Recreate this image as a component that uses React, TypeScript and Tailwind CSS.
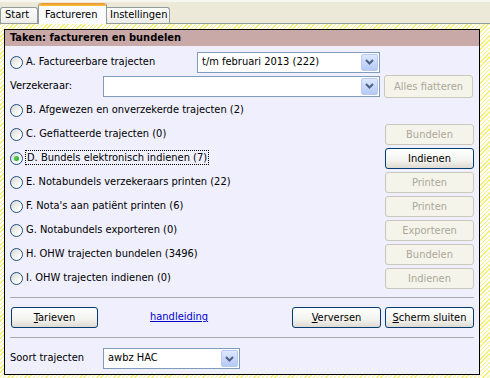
import React from "react";

function Radio({ checked }: { checked?: boolean }) {
  return (
    <span className="inline-flex w-[13px] h-[13px] shrink-0 items-center justify-center rounded-full border border-[#1C5180] bg-[linear-gradient(135deg,#D4D3CC,#FFFFFF_75%)]">
      {checked && (
        <span className="block w-[5px] h-[5px] rounded-full bg-[radial-gradient(circle_at_40%_40%,#5ED45E,#169A16)]" />
      )}
    </span>
  );
}

function Btn({
  children,
  disabled,
  className = "",
}: {
  children: React.ReactNode;
  disabled?: boolean;
  className?: string;
}) {
  const base =
    "h-[21px] shrink-0 flex items-center justify-center rounded-[3px] border leading-none";
  const look = disabled
    ? "border-[#CAC8BB] bg-[#F5F4EA] text-[#ACA899]"
    : "border-[#003C74] bg-[linear-gradient(180deg,#FFFFFF,#F3F3EF_60%,#DEDAD0)] text-black";
  return <div className={`${base} ${look} ${className}`}>{children}</div>;
}

function Chevron() {
  return (
    <svg width="9" height="6" viewBox="0 0 9 6">
      <polyline
        points="1,1 4.5,4.5 8,1"
        fill="none"
        stroke="#4D6185"
        strokeWidth="2"
      />
    </svg>
  );
}

function Combo({ value, className = "" }: { value?: string; className?: string }) {
  return (
    <div
      className={`h-[21px] shrink-0 flex items-center border border-[#7F9DB9] bg-white ${className}`}
    >
      <span className="flex-1 pl-[4px] whitespace-nowrap overflow-hidden">{value}</span>
      <span className="w-[17px] h-[17px] mr-px flex items-center justify-center rounded-[2px] border border-[#B9CAF0] bg-[linear-gradient(180deg,#DDE7FE,#B6C9F6)]">
        <Chevron />
      </span>
    </div>
  );
}

function Row({
  label,
  btn,
  checked,
  focus,
}: {
  label: string;
  btn: string;
  checked?: boolean;
  focus?: boolean;
}) {
  return (
    <div className="h-[24px] flex items-center">
      <Radio checked={checked} />
      <span
        className={`ml-[3px] flex-1 whitespace-nowrap ${
          focus ? "" : ""
        }`}
      >
        {focus ? (
          <span className="outline-1 outline-dotted outline-black px-px">{label}</span>
        ) : (
          label
        )}
      </span>
      <Btn disabled={!checked} className="w-[89px]">
        {btn}
      </Btn>
    </div>
  );
}

export default function App() {
  return (
    <div className="w-[490px] h-[378px] overflow-hidden flex flex-col bg-[#ECE9D8] text-[11px] text-black font-['DejaVu_Sans_Condensed','DejaVu_Sans',sans-serif]">
      {/* tab strip */}
      <div className="h-[24px] shrink-0 flex items-end border-b border-[#919B9C] border-t-2 border-t-[#F7F6F1]">
        <div className="w-[38px] h-[16px] flex items-center pl-[4px] border border-b-0 border-[#919B9C] rounded-t-[3px] bg-[linear-gradient(180deg,#FFFFFF,#ECEBE6)]">
          Start
        </div>
        <div className="w-[69px] h-[21px] -mb-px flex flex-col border-x border-[#919B9C] rounded-t-[3px] bg-[#FCFCFE]">
          <div className="h-[3px] rounded-t-[3px] bg-[linear-gradient(180deg,#E68B2C,#FFC73C)]" />
          <div className="flex-1 pl-[6px] pt-[1px]">Factureren</div>
        </div>
        <div className="w-[63px] h-[16px] flex items-center pl-[3px] border border-b-0 border-l-0 border-[#919B9C] rounded-tr-[3px] bg-[linear-gradient(180deg,#FFFFFF,#ECEBE6)]">
          Instellingen
        </div>
      </div>

      {/* tab page */}
      <div className="flex-1 pl-[4px] pt-[5px] bg-[repeating-linear-gradient(135deg,#F4EF6E_0px,#F4EF6E_1px,#FFFFFF_1px,#FFFFFF_3px)]">
        <div className="w-[476px] h-[346px] border border-black bg-[#EFEFFE] flex flex-col">
          <div className="h-[16px] shrink-0 bg-[#C9A8A8] font-bold pl-[5px] flex items-center">
            Taken: factureren en bundelen
          </div>
          <div className="px-[5px] pt-[4px] flex flex-col">
            <div className="h-[24px] flex items-center">
              <div className="w-[187px] flex items-center">
                <Radio />
                <span className="ml-[3px] whitespace-nowrap">A. Factureerbare trajecten</span>
              </div>
              <Combo value="t/m februari 2013 (222)" className="w-[183px]" />
            </div>
            <div className="h-[24px] flex items-center">
              <span className="w-[93px]">Verzekeraar:</span>
              <Combo className="w-[277px]" />
              <Btn disabled className="w-[89px] ml-[4px] h-[23px]">
                Alles fiatteren
              </Btn>
            </div>
            <div className="h-[24px] flex items-center">
              <Radio />
              <span className="ml-[3px] whitespace-nowrap">
                B. Afgewezen en onverzekerde trajecten (2)
              </span>
            </div>
            <Row label="C. Gefiatteerde trajecten (0)" btn="Bundelen" />
            <Row label="D. Bundels elektronisch indienen (7)" btn="Indienen" checked focus />
            <Row label="E. Notabundels verzekeraars printen (22)" btn="Printen" />
            <Row label="F. Nota's aan patiënt printen (6)" btn="Printen" />
            <Row label="G. Notabundels exporteren (0)" btn="Exporteren" />
            <Row label="H. OHW trajecten bundelen (3496)" btn="Bundelen" />
            <Row label="I. OHW trajecten indienen (0)" btn="Indienen" />

            <div className="mt-[7px] h-px bg-[#A9A9A9]" />

            <div className="mt-[9px] flex items-center">
              <Btn className="w-[87px] ml-px">
                <span>
                  <span className="underline">T</span>arieven
                </span>
              </Btn>
              <span className="ml-[52px] text-[#0000CC] underline">handleiding</span>
              <div className="flex-1" />
              <Btn className="w-[89px]">
                <span>
                  <span className="underline">V</span>erversen
                </span>
              </Btn>
              <Btn className="w-[89px] ml-[4px]">
                <span>
                  <span className="underline">S</span>cherm sluiten
                </span>
              </Btn>
            </div>

            <div className="mt-[9px] h-px bg-[#A9A9A9]" />

            <div className="mt-[10px] flex items-center">
              <span className="w-[93px]">Soort trajecten</span>
              <Combo value="awbz HAC" className="w-[137px]" />
            </div>
          </div>
        </div>
      </div>
    </div>
  );
}
